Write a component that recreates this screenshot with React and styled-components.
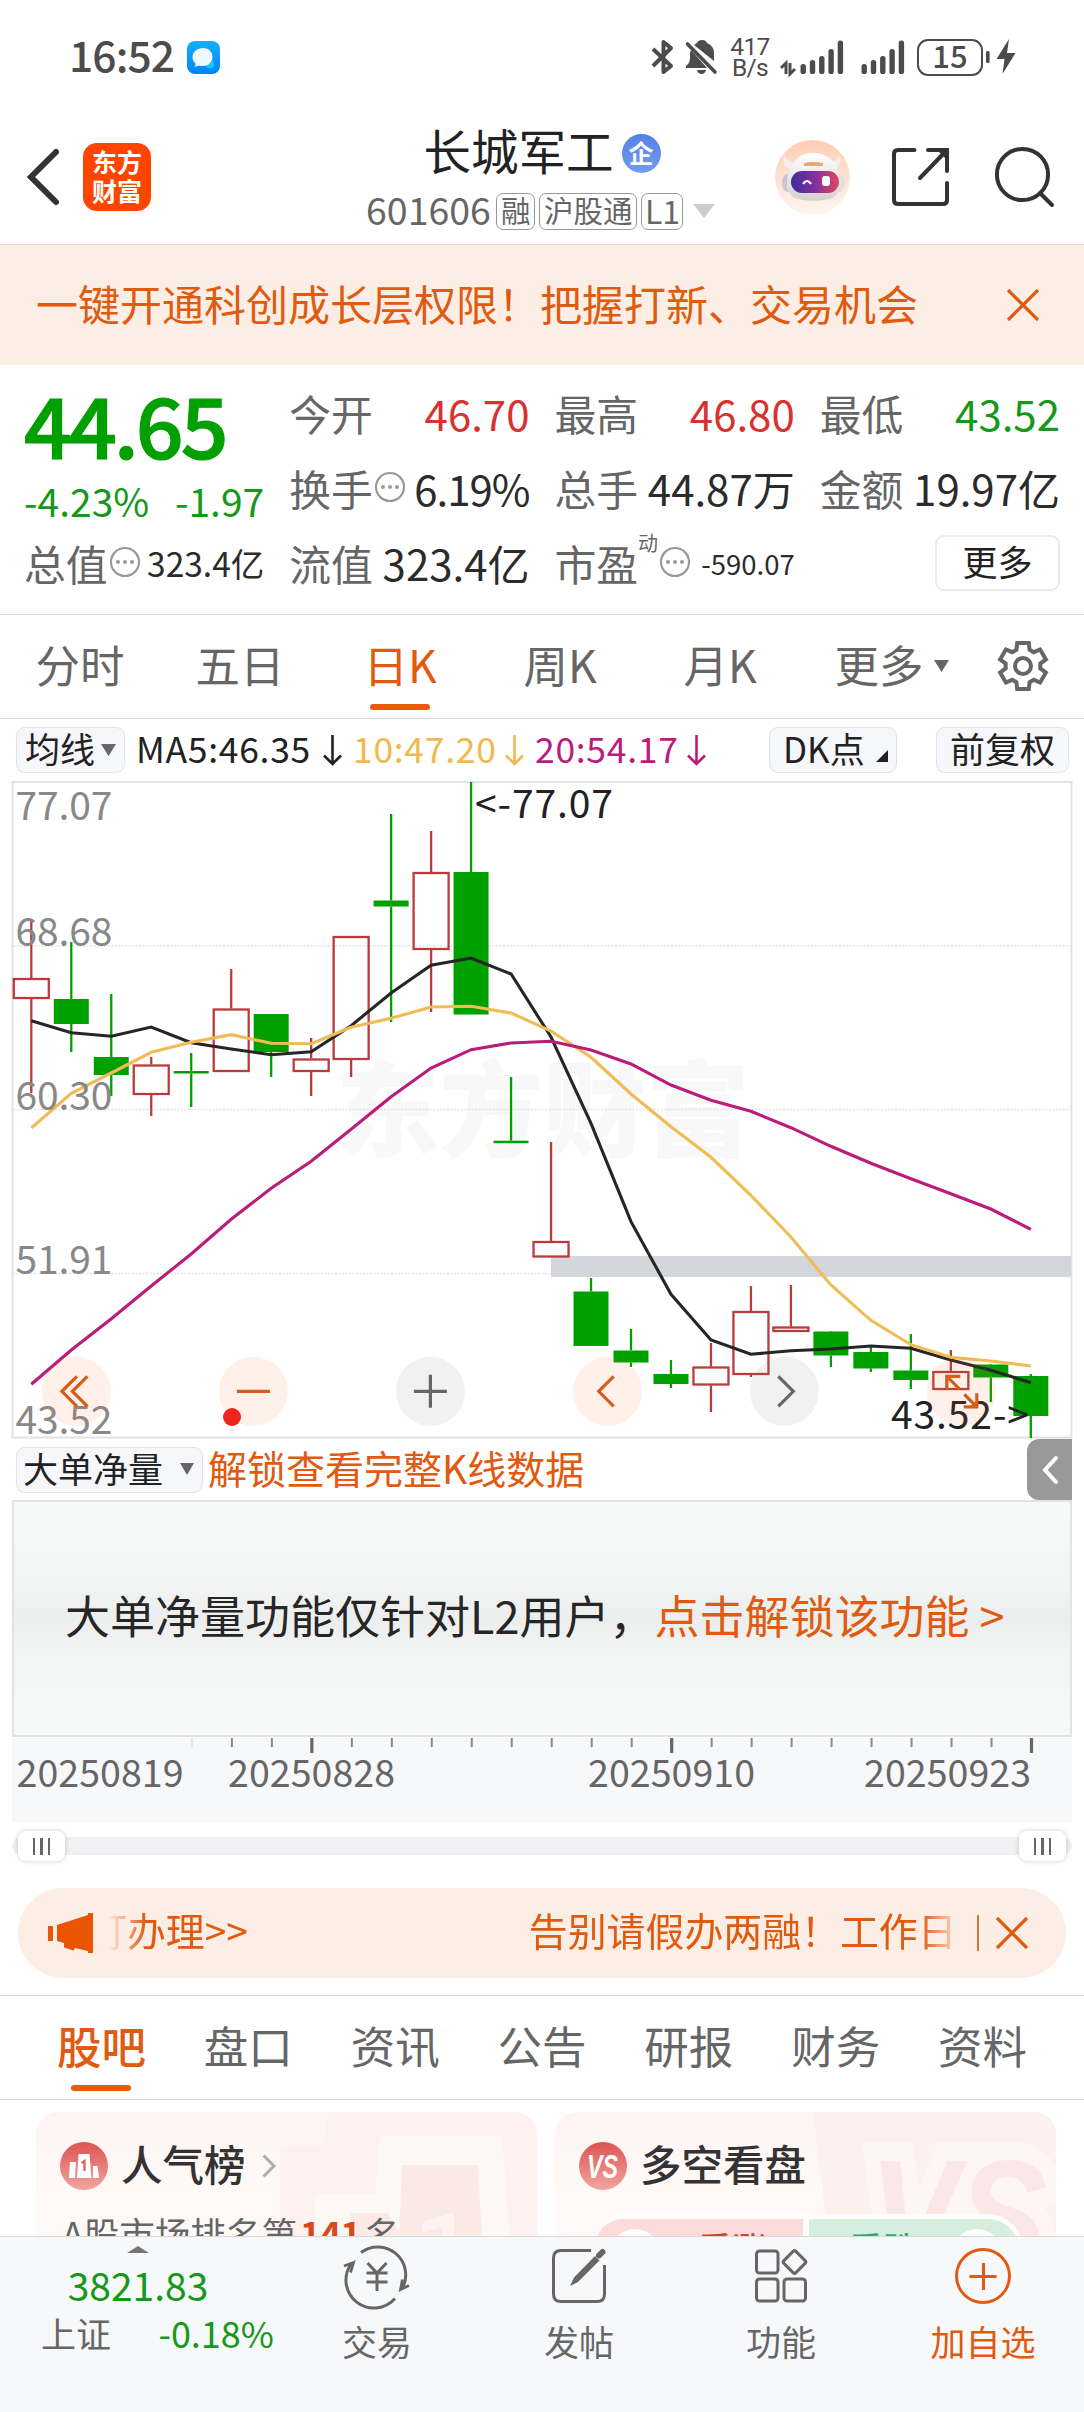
import React from 'react';
import styled, { createGlobalStyle, css } from 'styled-components';

const ORANGE = '#e05a10';
const GREEN = '#16981a';
const SOLID_GREEN = '#00a000';
const RED = '#d93030';
const CANDLE_RED = '#b93c3c';
const GREY = '#666';
const INK = '#2b2b2b';
const RULE = '#d9d9d9';

const GlobalStyle = createGlobalStyle`
  * {
    box-sizing: border-box;
  }
  body {
    margin: 0;
    background: #fff;
    font-family: 'Noto Sans CJK SC', sans-serif;
    color: ${INK};
  }
  svg {
    display: block;
    flex: none;
    overflow: visible;
  }
`;

const Page = styled.div`
  width: 1084px;
  height: 2412px;
  display: flex;
  flex-direction: column;
  overflow: hidden;
  white-space: nowrap;
`;

/* ---------- status bar ---------- */

const StatusBar = styled.div`
  height: 114px;
  flex: none;
  display: flex;
  align-items: center;
  padding: 0 67px 0 69px;
  color: #4c4c4c;
`;

const Clock = styled.span`
  width: 118px;
  font-size: 42.500px;
  line-height: 50px;
  letter-spacing: -0.9px;
  font-weight: 500;
  padding-bottom: 7px;
`;

const StatusIcons = styled.div`
  margin-left: auto;
  display: flex;
  align-items: center;
`;

const NetSpeed = styled.div`
  width: 40px;
  margin-left: 13px;
  text-align: center;
  font: 400 24.500px/21px Roboto, sans-serif;
  letter-spacing: -0.6px;
`;

const Battery = styled.div`
  width: 66px;
  height: 37px;
  margin-left: 12px;
  border: 2.5px solid #4c4c4c;
  border-radius: 11px;
  font-size: 31px;
  font-weight: 500;
  line-height: 27px;
  text-align: center;
`;

const BARS = [10, 14, 18, 25, 33.5];

const Signal = ({ arrows }) => (
  <svg width={arrows ? 62 : 44} height="34" fill="#4c4c4c">
    {arrows && (
      <path
        d="M0 28l5-5v11M9 23v11l5-5"
        fill="none"
        stroke="#4c4c4c"
        strokeWidth="3"
      />
    )}
    {BARS.map((h, i) => (
      <rect
        key={h}
        x={(arrows ? 19.5 : 0.5) + i * 9.3}
        y={34 - h}
        width="5.4"
        height={h}
        rx="2.6"
      />
    ))}
  </svg>
);

const Slot = styled.div`
  margin-left: ${props => props.gap}px;
`;

const Status = () => (
  <StatusBar>
    <Clock>16:52</Clock>
    <svg width="33" height="33" viewBox="0 0 33 33">
      <defs>
        <linearGradient id="msg" x1="0" y1="0" x2="0" y2="1">
          <stop offset="0" stopColor="#14b0ff" />
          <stop offset="1" stopColor="#0083fa" />
        </linearGradient>
      </defs>
      <rect width="33" height="33" rx="8" fill="url(#msg)" />
      <path d="M18 24c6-1 8-4 8-7l1 9-3 1q-4 1-6-3z" fill="#10cdf5" />
      <path
        d="M16 7c6 0 9.500 4 9.500 9s-4 9-9.500 9c-2 0-3 0-4-.6L8 26l.6-3.600C6.500 21 5.500 18.500 5.500 16 5.500 11 10 7 16 7z"
        fill="#f1f9ff"
      />
    </svg>
    <StatusIcons>
      <svg width="22" height="34" viewBox="0 0 22 34" fill="none" stroke="#4c4c4c">
        <path d="M1 9l18 17-7.500 6V2l7.500 6L1 26" strokeWidth="4" strokeLinejoin="round" />
      </svg>
      <Slot gap={12}>
        <svg width="31" height="34" viewBox="0 0 31 34" fill="#4c4c4c">
          <path d="M8 5l3-2q1-3 5-3t5 3q7 3 7 10v8zM5 10l16 18H0v-2q4-3 4-8v-5z" />
          <path d="M11 30h9q-1 4-4.500 4T11 30z" />
          <path d="M1.500 4L29 32" stroke="#4c4c4c" strokeWidth="3.600" strokeLinecap="round" />
        </svg>
      </Slot>
      <NetSpeed>
        417
        <br />
        B/s
      </NetSpeed>
      <Slot gap={11}>
        <Signal arrows />
      </Slot>
      <Slot gap={18}>
        <Signal />
      </Slot>
      <Battery>15</Battery>
      <Slot gap={3}>
        <svg width="31" height="36" viewBox="0 0 31 36" fill="#4c4c4c">
          <rect x="0" y="12" width="3.600" height="12" rx="1.600" />
          <path d="M23 0L10.500 20h8L16.500 35 29.500 14h-8.500z" />
        </svg>
      </Slot>
    </StatusIcons>
  </StatusBar>
);

/* ---------- title bar ---------- */

const TitleBar = styled.header`
  height: 131px;
  flex: none;
  display: grid;
  grid-template-columns: 330px 1fr 330px;
  border-bottom: 1px solid ${RULE};
`;

const BarSide = styled.div`
  display: flex;
  align-items: center;
  padding: 0 0 4px ${props => props.inset}px;
`;

const AppLogo = styled.div`
  width: 68px;
  height: 68px;
  margin-left: 23px;
  padding-top: 4px;
  border-radius: 14px;
  background: #ff4500;
  color: #fff;
  font-size: 25px;
  font-weight: 700;
  line-height: 29px;
  text-align: center;
`;

const TitleCol = styled.div`
  display: flex;
  flex-direction: column;
  align-items: center;
`;

const StockName = styled.h1`
  margin: 9px 0 0;
  display: flex;
  align-items: center;
  gap: 8px;
  height: 54px;
  font-size: 47.500px;
  font-weight: 400;
  color: #222;
  line-height: 54px;
`;

const OrgBadge = styled.span`
  width: 39px;
  height: 39px;
  margin-top: 6px;
  border-radius: 50%;
  background: linear-gradient(#5480e4, #739dee);
  color: #fff;
  font-size: 25px;
  font-weight: 700;
  line-height: 36px;
  text-align: center;
`;

const CodeRow = styled.div`
  display: flex;
  align-items: center;
  gap: 4.5px;
  margin: 14px 0 0 -3px;
  height: 40px;
  color: ${GREY};
`;

const StockCode = styled.span`
  font-size: 37.500px;
  line-height: 40px;
  padding-bottom: 5px;
  margin-right: 1px;
`;

const Tag = styled.span`
  height: 37px;
  padding: 0 3.5px;
  border: 1.500px solid #999;
  border-radius: 7px;
  font-size: 29.500px;
  line-height: 31px;
`;

const LevelTag = styled(Tag)`
  width: 42px;
  padding: 0;
  font-size: 32px;
  line-height: 32px;
  text-align: center;
`;

const Robot = () => (
  <svg width="75" height="75" viewBox="0 0 75 75">
    <defs>
      <linearGradient id="halo" x1="0" y1="0" x2="0" y2="1">
        <stop offset="0" stopColor="#ffcdb4" />
        <stop offset="1" stopColor="#fff6f1" />
      </linearGradient>
      <linearGradient id="visor">
        <stop offset="0" stopColor="#3a2f9e" />
        <stop offset=".55" stopColor="#8c2f9c" />
        <stop offset="1" stopColor="#e04a5c" />
      </linearGradient>
      <linearGradient id="shell" x1="0" y1="0" x2="0" y2="1">
        <stop offset="0" stopColor="#fff" />
        <stop offset="1" stopColor="#d6cfd2" />
      </linearGradient>
    </defs>
    <circle cx="37.500" cy="37.500" r="37.500" fill="url(#halo)" />
    <path d="M17 30Q6 27 9 15q2 6 11 8zM56 30q12-3 9-15-2 6-11 8z" fill="#f3eef0" />
    <ellipse cx="12" cy="43" rx="5" ry="9" fill="#cfc7cb" />
    <ellipse cx="65" cy="43" rx="5" ry="9" fill="#e6dfe2" />
    <path
      d="M38 13c15 0 22 8 26 20 3 12 0 20-5 24-9 5-32 5-41 0-6-4-8-13-4-25 4-11 10-19 24-19z"
      fill="url(#shell)"
    />
    <path d="M29 23q8-2 19 0v3H29z" fill="#e8a878" />
    <rect x="16" y="31" width="48" height="22" rx="11" fill="url(#visor)" />
    <path d="M28 44q4-6 8 0" fill="none" stroke="#fff" strokeWidth="2.200" />
    <rect x="47" y="36" width="8" height="10" rx="3" fill="#fff" />
  </svg>
);

const Header = () => (
  <TitleBar>
    <BarSide inset={27}>
      <svg width="33" height="56" viewBox="0 0 33 56" fill="none">
        <path d="M29 3L4 28l25 25" stroke="#333" strokeWidth="6" strokeLinecap="round" />
      </svg>
      <AppLogo>
        东方
        <br />
        财富
      </AppLogo>
    </BarSide>
    <TitleCol>
      <StockName>
        长城军工<OrgBadge>企</OrgBadge>
      </StockName>
      <CodeRow>
        <StockCode>601606</StockCode>
        <Tag>融</Tag>
        <Tag>沪股通</Tag>
        <LevelTag>L1</LevelTag>
        <svg width="27" height="14" viewBox="-5 0 27 14" fill="#ccc">
          <path d="M0 0h22L11 14z" />
        </svg>
      </CodeRow>
    </TitleCol>
    <BarSide inset={21}>
      <Robot />
      <Slot gap={42}>
        <svg width="57" height="58" viewBox="0 0 57 58" fill="none" stroke="#333" strokeWidth="4">
          <path
            d="M22.500 2H6Q2 2 2 6v46q0 4 4 4h45q4 0 4-4V35M36 2h19v21M55 2L28 30"
            strokeLinecap="round"
          />
          <path d="M46 3h8v8z" fill="#333" stroke="none" />
        </svg>
      </Slot>
      <Slot gap={46}>
        <svg width="60" height="60" viewBox="0 0 60 60" fill="none" stroke="#333" strokeWidth="4">
          <circle cx="27.500" cy="27.500" r="25.600" />
          <path d="M45 46l12 12" strokeLinecap="round" />
        </svg>
      </Slot>
    </BarSide>
  </TitleBar>
);

/* ---------- notice ---------- */

const Notice = styled.div`
  height: 120px;
  flex: none;
  display: flex;
  align-items: center;
  justify-content: space-between;
  padding: 0 45px 0 36px;
  background: #fceee5;
  color: ${ORANGE};
  font-size: 42px;
`;

const NoticeText = styled.span`
  padding-bottom: 5px;
`;

const Cross = () => (
  <svg width="32" height="32" viewBox="0 0 32 32">
    <path d="M1 1l30 30M31 1L1 31" stroke={ORANGE} strokeWidth="3.200" />
  </svg>
);

/* ---------- quote ---------- */

const Quote = styled.section`
  height: 250px;
  flex: none;
  display: grid;
  grid-template-columns: repeat(4, 1fr);
  grid-template-rows: repeat(3, 75px);
  column-gap: 25px;
  padding: 11px 24px 0;
  border-bottom: 1px solid ${RULE};
`;

const PriceBox = styled.div`
  grid-row: span 2;
  color: ${GREEN};
`;

const Price = styled.div`
  color: ${SOLID_GREEN};
  font-size: 84px;
  font-weight: 500;
  line-height: 84px;
  letter-spacing: -3px;
  padding-top: 5px;
  -webkit-text-stroke: 1.2px ${SOLID_GREEN};
`;

const Change = styled.div`
  display: flex;
  justify-content: space-between;
  padding-top: 5px;
  font-size: 39px;
  line-height: 60px;
`;

const tones = { up: RED, down: GREEN, plain: INK };

const Field = styled.div`
  display: flex;
  align-items: center;
  justify-content: space-between;
  padding-bottom: 2px;
  font-size: 41.800px;
  line-height: 60px;
  color: ${GREY};
`;

const FieldLabel = styled.span`
  display: flex;
  align-items: center;
`;

const FieldValue = styled.span`
  color: ${({ tone = 'plain' }) => tones[tone]};
  font-size: ${({ size = 42 }) => size}px;
  letter-spacing: ${({ tight }) => (tight ? '-1px' : '0')};
`;

const Sup = styled.sup`
  align-self: flex-start;
  font-size: 20px;
  line-height: 20px;
`;

const MoreButton = styled.button`
  justify-self: end;
  align-self: center;
  width: 125px;
  height: 56px;
  margin-bottom: 1px;
  padding: 0 0 5px;
  border: 2px solid #e8ebed;
  border-radius: 9px;
  background: #fff;
  color: #222;
  font: 35px/46px 'Noto Sans CJK SC', sans-serif;
`;

const Hint = () => (
  <svg width="34" height="38" viewBox="-2 -3 34 38">
    <circle cx="15" cy="15" r="14" fill="none" stroke="#999" strokeWidth="2.200" />
    {[8, 15, 22].map(x => (
      <circle key={x} cx={x} cy="15" r="2" fill="#999" />
    ))}
  </svg>
);

const QuoteBoard = () => (
  <Quote>
    <PriceBox>
      <Price>44.65</Price>
      <Change>
        <span>-4.23%</span>
        <span>-1.97</span>
      </Change>
    </PriceBox>
    <Field>
      今开<FieldValue tone="up">46.70</FieldValue>
    </Field>
    <Field>
      最高<FieldValue tone="up">46.80</FieldValue>
    </Field>
    <Field>
      最低<FieldValue tone="down">43.52</FieldValue>
    </Field>
    <Field>
      <FieldLabel>
        换手
        <Hint />
      </FieldLabel>
      <FieldValue tight>6.19%</FieldValue>
    </Field>
    <Field>
      总手<FieldValue>44.87万</FieldValue>
    </Field>
    <Field>
      金额<FieldValue>19.97亿</FieldValue>
    </Field>
    <Field>
      <FieldLabel>
        总值
        <Hint />
      </FieldLabel>
      <FieldValue size={33.5}>323.4亿</FieldValue>
    </Field>
    <Field>
      流值<FieldValue>323.4亿</FieldValue>
    </Field>
    <Field>
      <FieldLabel>
        市盈
        <Sup>动</Sup>
        <Hint />
      </FieldLabel>
      <FieldValue size={27.5}>-590.07</FieldValue>
    </Field>
    <MoreButton>更多</MoreButton>
  </Quote>
);

/* ---------- tabs ---------- */

const TabBar = styled.nav`
  height: 104px;
  flex: none;
  display: flex;
  border-bottom: 1px solid ${RULE};
  font-size: 44.500px;
  color: ${GREY};
`;

const Tab = styled.div`
  width: ${props => props.width}px;
  display: flex;
  flex-direction: column;
  align-items: center;
  line-height: 60px;
  padding-top: 19px;

  ${({ active }) =>
    active &&
    css`
      color: ${ORANGE};

      &::after {
        content: '';
        width: 60px;
        height: 6px;
        margin-top: 10px;
        border-radius: 3px;
        background: #e95a0c;
      }
    `}
`;

const SectionBar = styled(TabBar)`
  height: 105px;
  padding: 0 28px;
  border-top: 1px solid ${RULE};
`;

const SectionTab = styled(Tab)`
  font-weight: ${({ active }) => (active ? 500 : 400)};
`;

const MoreTab = styled(Tab)`
  flex-direction: row;
  align-items: flex-start;
  justify-content: center;
  padding-left: 19px;
  gap: 10px;
`;

const Caret = ({ width = 15, top = 0 }) => (
  <svg width={width} height={12 + top} viewBox={`0 ${-top} ${width} ${12 + top}`} fill={GREY}>
    <path d={`M0 0h${width}L${width / 2} 12z`} />
  </svg>
);

// six flat teeth, the first one pointing up
const gearPoints = Array.from({ length: 6 }, (_, i) =>
  [[-22, 17.5], [-14, 23.8], [14, 23.8], [22, 17.5]].map(([deg, r]) => {
    const a = ((i * 60 + deg) * Math.PI) / 180;
    return `${(r * Math.sin(a)).toFixed(1)},${(-r * Math.cos(a)).toFixed(1)}`;
  })
)
  .flat()
  .join(' ');

const GearSlot = styled.div`
  padding: 25px 0 0 33px;
`;

const Gear = () => (
  <svg width="52" height="52" viewBox="-26 -26 52 52" fill="none" stroke={GREY} strokeWidth="4">
    <polygon points={gearPoints} />
    <circle r="8" />
  </svg>
);

const PeriodTabs = () => (
  <TabBar>
    <Tab width={160}>分时</Tab>
    <Tab width={160}>五日</Tab>
    <Tab width={160} active>
      日K
    </Tab>
    <Tab width={160}>周K</Tab>
    <Tab width={160}>月K</Tab>
    <MoreTab width={164}>
      更多
      <Caret top={26} />
    </MoreTab>
    <GearSlot>
      <Gear />
    </GearSlot>
  </TabBar>
);

/* ---------- chart ---------- */

const ChartBar = styled.div`
  height: 62px;
  flex: none;
  display: flex;
  align-items: center;
  padding: 0 15px 0 16px;
  font-size: 35.500px;
`;

const Chip = styled.button`
  width: ${props => props.width}px;
  height: 46px;
  display: flex;
  align-items: center;
  justify-content: ${({ spread }) => (spread ? 'space-between' : 'center')};
  gap: 6px;
  padding: 0 8px 4px ${({ inset = 8 }) => inset}px;
  border: 1.500px solid #dfe3e8;
  border-radius: 9px;
  background: #f6f7fa;
  color: #222;
  font: 35px/40px 'Noto Sans CJK SC', sans-serif;
`;

const Average = styled.span`
  width: ${props => props.width}px;
  margin-left: 11px;
  display: flex;
  align-items: center;
  justify-content: space-between;
  color: ${props => props.color};
  letter-spacing: 0.7px;
  line-height: 46px;
  padding-bottom: 5px;
`;

const DownArrow = ({ color }) => (
  <svg width="19" height="36" viewBox="0 -5 19 36" fill="none" stroke={color} strokeWidth="2.600">
    <path d="M9.500 0v29M1 20.500l8.500 8.500 8.500-8.500" />
  </svg>
);

const ChipSpacer = styled.div`
  margin-left: auto;
  display: flex;
  gap: 39px;
`;

const averages = [
  { text: 'MA5:46.35', color: '#222', width: 206 },
  { text: '10:47.20', color: '#f0b94f', width: 171 },
  { text: '20:54.17', color: '#b91c7b', width: 171 },
];

// [wick top, body top, body bottom, wick bottom, rising]
const candles = [
  [920, 978, 999, 1093, 1],
  [942, 999, 1024, 1052, 0],
  [994, 1057, 1075, 1096, 0],
  [1057, 1064.5, 1095, 1116, 1],
  [1053, 1071, 1073.5, 1107, 0],
  [969, 1008.5, 1072, 1072, 1],
  [1014, 1014, 1052, 1077, 0],
  [1038, 1058.5, 1072, 1096, 1],
  [936, 936, 1060, 1077, 1],
  [814, 900.5, 906.5, 1022, 0],
  [831, 872, 950, 1012, 1],
  [782, 872, 1014.5, 1014.5, 0],
  [1077, 1140.7, 1143.2, 1143, 0],
  [1142, 1241, 1257.5, 1257, 1],
  [1278, 1291.5, 1346, 1346, 0],
  [1329, 1350.5, 1362.5, 1367, 0],
  [1360, 1374, 1384, 1388, 0],
  [1343, 1366.5, 1385.500, 1412, 1],
  [1286, 1311, 1375, 1377, 1],
  [1285, 1326.5, 1332, 1332, 1],
  [1331, 1331.5, 1355.5, 1367, 0],
  [1347, 1352, 1368.5, 1372, 0],
  [1334, 1370.5, 1380, 1389, 0],
  [1350, 1371, 1390, 1390, 1],
  [1364, 1364.5, 1377.5, 1402, 0],
  [1374, 1376, 1416, 1438, 0],
];

const ma5 = [
  1020.7, 1032.7, 1036.3, 1027, 1042.7, 1049, 1054.7, 1051.7, 1025.7, 993, 965.3, 958, 974, 1037,
  1123.3, 1221.7, 1294.3, 1340, 1354.3, 1350.7, 1349, 1346, 1348.3, 1360, 1370.3, 1382.7,
];
const ma10 = [
  1128, 1093.3, 1073, 1052.3, 1042.3, 1034.7, 1043.3, 1043.7, 1027.3, 1018.3, 1007, 1006.3, 1013,
  1031, 1057.3, 1094, 1126.7, 1157.3, 1195.3, 1237, 1285, 1320.3, 1344.7, 1357.3, 1361, 1366,
];
const ma20 = [
  1384.3, 1350, 1318.7, 1286, 1254, 1219.3, 1188.3, 1161.3, 1129.3, 1096.7, 1068, 1049.7, 1043,
  1041.3, 1050, 1064, 1085, 1100.3, 1111.3, 1127.7, 1146.3, 1163.3, 1178.7, 1193.7, 1209, 1229.3,
];

const dayX = i => 31.3 + i * 39.98;
const toPoints = ys => ys.map((y, i) => `${dayX(i).toFixed(1)},${y}`).join(' ');

const Candle = ({ index, data: [high, top, bottom, low, rising] }) => {
  const x = dayX(index);
  const color = rising ? CANDLE_RED : SOLID_GREEN;
  return (
    <g stroke={color} strokeWidth="2.300">
      {high < top && <path d={`M${x} ${high}V${top}`} />}
      {low > bottom && <path d={`M${x} ${bottom}V${low}`} />}
      {rising ? (
        <rect x={x - 17.5} y={top + 1} width="35" height={bottom - top - 2} fill="none" />
      ) : (
        <rect x={x - 17.5} y={top} width="35" height={bottom - top} fill={color} stroke="none" />
      )}
    </g>
  );
};

const Series = styled.polyline`
  fill: none;
  stroke: ${props => props.color};
  stroke-width: 3.1px;
`;

const AxisText = styled.text`
  font-size: ${({ size = 39 }) => size}px;
  fill: ${({ color = '#888' }) => color};
`;

const Watermark = styled.text`
  font-size: 104px;
  font-weight: 900;
  fill: #f8f8f8;
`;

const controls = [
  { x: 76.4, warm: true, d: 'M0.500 -15l-15 15 15 15M11 -15l-15 15 15 15' },
  { x: 253.4, warm: true, d: 'M-16.500 0h33' },
  { x: 430.4, d: 'M-16.500 0h33M0 -16.500v33' },
  { x: 607.7, warm: true, d: 'M6 -15l-15 15 15 15' },
  { x: 784.3, d: 'M-6 -15l15 15 -15 15' },
  { x: 961.3, warm: true, d: 'M-1 -15h-13.500v13M-14.500 -15l12.500 12.500M15.500 2v13.500h-13M3 3l12.500 12.500' },
];

const labels = [['77.07', 820], ['68.68', 946], ['60.30', 1110], ['51.91', 1273.5], ['43.52', 1433.5]];

const KLine = () => (
  <svg width="1084" height="658" viewBox="0 781 1084 658">
    <Watermark x="336" y="1149" textLength="414">
      东方财富
    </Watermark>
    <g stroke="#e2e2e2" strokeWidth="1.500" strokeDasharray="2 1.500">
      <path d="M13 946H1071M13 1109.500H1071M13 1273.500H1071" />
    </g>
    <path d="M12.500 782H1071.500V1437.500H12.500z" fill="none" stroke="#e2e2e2" strokeWidth="2" />
    <rect x="551" y="1256" width="520" height="21" fill="#d3d6db" />
    {candles.map((data, i) => (
      <Candle key={i} index={i} data={data} />
    ))}
    <Series points={toPoints(ma5)} color="#262626" />
    <Series points={toPoints(ma10)} color="#efbc55" />
    <Series points={toPoints(ma20)} color="#b91c7b" />
    {labels.map(([text, y]) => (
      <AxisText key={text} x="15.500" y={y} textLength="97">
        {text}
      </AxisText>
    ))}
    <AxisText x="475" y="818" textLength="138" color="#222">
      {'<-77.07'}
    </AxisText>
    <AxisText x="891" y="1429" textLength="138" color="#222">
      {'43.52->'}
    </AxisText>
    {controls.map(({ x, warm, d }) => (
      <g key={x} transform={`translate(${x} 1391.300)`}>
        <circle r="34.500" fill={warm ? 'rgba(255,110,40,.1)' : 'rgba(120,120,120,.1)'} />
        <path d={d} fill="none" stroke={warm ? '#d65c1c' : GREY} strokeWidth="3.200" />
      </g>
    ))}
    <circle cx="232" cy="1417" r="9" fill="#f0241e" />
  </svg>
);

const IndicatorBar = styled.div`
  height: 61px;
  flex: none;
  display: flex;
  align-items: center;
  padding: 0 12px 0 16px;
`;

const UnlockLink = styled.a`
  margin: 0 auto 6px 5px;
  color: ${ORANGE};
  font-size: 39px;
  line-height: 50px;
`;

const Drawer = styled.div`
  width: 45px;
  height: 61px;
  display: flex;
  align-items: center;
  justify-content: center;
  border-radius: 12px 0 0 12px;
  background: #999;
`;

const LockedPanel = styled.div`
  height: 237px;
  flex: none;
  margin: 0 12px;
  padding: 0 0 8px 51px;
  display: flex;
  align-items: center;
  border: 2px solid #e2e3e3;
  background: linear-gradient(#f8faf9, #f3f4f4 35%, #eceeee 50%, #f3f4f4 65%, #f8faf9);
  color: #262626;
  font-size: 45px;
`;

const Accent = styled.span`
  color: ${ORANGE};
`;

const dates = [[16.5, '20250819'], [228, '20250828'], [588, '20250910'], [864, '20250923']];
const majorTicks = [7, 16, 25];

const DateAxis = () => (
  <svg width="1084" height="85" viewBox="0 1737 1084 85">
    <rect x="12" y="1738" width="1060" height="84" fill="#f7f8fa" />
    {candles.map((_, i) => {
      const major = majorTicks.includes(i);
      return (
        i > 3 && (
          <path
            key={i}
            d={`M${dayX(i) + 0.7} 1738v${major ? 15 : 9}`}
            stroke={i === 4 ? '#e4e4e4' : major ? '#666' : '#888'}
            strokeWidth={major ? 3.2 : 2}
          />
        )
      );
    })}
    {dates.map(([x, text]) => (
      <AxisText key={text} x={x} y="1786.500" size={37.5} color={GREY} textLength="167">
        {text}
      </AxisText>
    ))}
  </svg>
);

const RangeTrack = styled.div`
  height: 18px;
  flex: none;
  margin: 15px 12px 0;
  padding: 0 6px;
  display: flex;
  align-items: center;
  justify-content: space-between;
  border-radius: 9px;
  background: #f1f1f4;
`;

const Handle = styled.div`
  width: 47px;
  height: 30px;
  display: flex;
  align-items: center;
  justify-content: center;
  gap: 5px;
  border-radius: 8px;
  background: #fff;
  box-shadow: 0 0 5px rgba(0, 0, 0, 0.2);

  i {
    width: 2.5px;
    height: 17px;
    background: #666;
  }
`;

const Range = () => (
  <RangeTrack>
    {['from', 'to'].map(side => (
      <Handle key={side}>
        <i />
        <i />
        <i />
      </Handle>
    ))}
  </RangeTrack>
);

/* ---------- promo ---------- */

const Promo = styled.div`
  height: 90px;
  flex: none;
  margin: 33px 18px 17px;
  padding: 0 38px 0 30px;
  display: flex;
  align-items: center;
  border-radius: 45px;
  background: #fceee5;
`;

const Ticker = styled.div`
  width: 854px;
  margin-left: 15px;
  overflow: hidden;
  display: flex;
  gap: 281px;
  color: ${ORANGE};
  font-size: 38.900px;
  line-height: 56px;
  padding-bottom: 8px;
  mask-image: linear-gradient(90deg, transparent 0, #000 38px, #000 812px, transparent 854px);

  span:first-child {
    margin-left: -20px;
  }
`;

const Divider = styled.i`
  width: 1.5px;
  height: 36px;
  margin: 0 17px 0 15px;
  background: #c9783f;
`;

const sections = ['股吧', '盘口', '资讯', '公告', '研报', '财务', '资料'];

/* ---------- cards ---------- */

const Cards = styled.div`
  flex: 1;
  min-height: 0;
  display: flex;
  gap: 18px;
  padding: 12px 28px 0 36px;
  overflow: hidden;
`;

const Card = styled.article`
  position: relative;
  width: 501px;
  height: 240px;
  flex: none;
  padding: 24px 24px 0;
  border-radius: 22px;
  overflow: hidden;
  background: linear-gradient(#fef5f3, #fffaf7 40%);
`;

const CardArt = styled.svg`
  position: absolute;
  top: 0;
  left: 0;
`;

const CardHead = styled.div`
  position: relative;
  height: 60px;
  display: flex;
  align-items: center;
`;

const CardTitle = styled.h2`
  margin: 0 16px 6px 13px;
  font-size: 41.500px;
  font-weight: 500;
  line-height: 50px;
  color: #333;
`;

const RankLine = styled.p`
  position: relative;
  margin: 15px 0 0 2px;
  color: ${GREY};
  font-size: 35.600px;
  line-height: 44px;

  b {
    color: #d9481c;
    letter-spacing: -0.8px;
    margin: 0 4px 0 3px;
  }
`;

const VoteBar = styled.div`
  position: relative;
  width: 434px;
  height: 70px;
  margin: 18px 0 0 10px;
  border: 5px solid #fffdfc;
  border-radius: 40px;
  display: flex;
  gap: 6px;
  overflow: hidden;
  background: #fffdfc;
`;

const Vote = styled.div`
  flex: 1;
  display: flex;
  justify-content: space-between;
  flex-direction: ${({ down }) => (down ? 'row-reverse' : 'row')};
  padding: 10px 16px 0;
  background: ${({ down }) => (down ? '#d5eedd' : '#fcdcda')};
  color: ${({ down }) => (down ? '#3ea86a' : '#c8472f')};
  font-size: 34px;
  font-weight: 500;
  line-height: 44px;

  &::before {
    content: '';
    width: 50px;
    height: 50px;
    border-radius: 50%;
    background: #fff;
  }
  span {
    margin: ${({ down }) => (down ? '-3px 0 0 24px' : '-3px 21px 0 0')};
  }
`;

const BadgeFill = () => (
  <defs>
    <linearGradient id="badge" x1="0" y1="0" x2="0" y2="1">
      <stop offset="0" stopColor="#dc5450" />
      <stop offset="1" stopColor="#f2a5a2" />
    </linearGradient>
  </defs>
);

const VsText = styled.text`
  font-family: 'Liberation Sans', sans-serif;
  font-weight: 700;
  font-style: italic;
`;

const CardRow = () => (
  <Cards>
    <Card>
      <CardArt width="501" height="130" viewBox="0 0 501 130">
        <path d="M291 0H501V130H244V33H288z" fill="#fdf2ef" />
        <path d="M344 24H466L474 130H279V82H339z" fill="#fef8f5" />
        <path d="M366 53H442L446 130H363V120L352 101H315V130H363z" fill="#fbe9e6" />
        <path d="M387 110l31-10v30h-12v-15l-20 6z" fill="#fef3f0" />
      </CardArt>
      <CardHead>
        <svg width="48" height="48" viewBox="0 0 48 48">
          <BadgeFill />
          <circle cx="24" cy="24" r="24" fill="url(#badge)" />
          <path d="M10 20h6l-1 16H9zM18.500 12h11l2 24H17zM33 24h4.500l1.500 12h-6z" fill="#fff" />
          <path d="M21.500 21l3-2v10" fill="none" stroke="#dd6663" strokeWidth="2.400" />
        </svg>
        <CardTitle>人气榜</CardTitle>
        <svg width="14" height="24" viewBox="0 0 14 24" fill="none">
          <path d="M1.500 1.500L12 12 1.500 22.500" stroke="#b0acab" strokeWidth="3" />
        </svg>
      </CardHead>
      <RankLine>
        A股市场排名第<b>141</b>名
      </RankLine>
    </Card>
    <Card>
      <CardArt width="501" height="130" viewBox="0 0 501 130">
        <path d="M258 0H501V130H274z" fill="#fdf1ee" />
        <VsText
          x="314"
          y="163"
          fontSize="165"
          textLength="178"
          lengthAdjust="spacingAndGlyphs"
          fill="#fbe8e6"
          stroke="#fef6f3"
          strokeWidth="38"
          paintOrder="stroke"
        >
          VS
        </VsText>
      </CardArt>
      <CardHead>
        <svg width="48" height="48" viewBox="0 0 48 48">
          <circle cx="24" cy="24" r="24" fill="url(#badge)" />
          <VsText x="8" y="36" fontSize="33" textLength="31" lengthAdjust="spacingAndGlyphs" fill="#fff">
            VS
          </VsText>
        </svg>
        <CardTitle>多空看盘</CardTitle>
      </CardHead>
      <VoteBar>
        <Vote>
          <span>看涨</span>
        </Vote>
        <Vote down>
          <span>看跌</span>
        </Vote>
      </VoteBar>
    </Card>
  </Cards>
);

/* ---------- bottom bar ---------- */

const BottomBar = styled.footer`
  position: relative;
  height: 176px;
  flex: none;
  display: flex;
  border-top: 1px solid #d6d8da;
  background: #f7f8fa;
`;

const IndexBox = styled.div`
  width: 276px;
  display: flex;
  flex-direction: column;
  align-items: center;
  padding-top: 9px;
  color: ${GREEN};
`;

const IndexValue = styled.div`
  margin-top: 5px;
  font-size: 39px;
  line-height: 52px;
`;

const IndexRow = styled.div`
  align-self: stretch;
  display: flex;
  justify-content: space-between;
  padding: 0 2px 0 41px;
  font-size: 36px;
  line-height: 45px;

  span {
    color: ${GREY};
    font-size: 35px;
  }
`;

const Action = styled.div`
  width: 202px;
  display: flex;
  flex-direction: column;
  align-items: center;
  padding-top: 10px;
  color: ${({ primary }) => (primary ? ORANGE : GREY)};
  font-size: 35px;
  line-height: 44px;

  svg {
    margin-bottom: 14px;
  }
`;

const ActionIcon = ({ children }) => (
  <svg width="68" height="58" viewBox="-34 -29 68 58" fill="none" stroke="currentColor" strokeWidth="3">
    {children}
  </svg>
);

const Footer = () => (
  <BottomBar>
    <IndexBox>
      <svg width="22" height="7" viewBox="0 0 22 7" fill="#777">
        <path d="M0 7L11 0l11 7z" />
      </svg>
      <IndexValue>3821.83</IndexValue>
      <IndexRow>
        <span>上证</span>-0.18%
      </IndexRow>
    </IndexBox>
    <Action>
      <ActionIcon>
        <path d="M-16 -23.500A28 28 0 0 1 25.500 12M18 22.500A28 28 0 0 1 -26 -12" />
        <path d="M-33 -10l9.500-3.500-3 10M32 9.500l-8.500 4 2-10" strokeWidth="2.800" />
        <path d="M-9.500 -13L0 -3l9.500-10M0 -3v18M-10.500 -3h21M-10.500 6h21" />
      </ActionIcon>
      交易
    </Action>
    <Action>
      <ActionIcon>
        <path d="M12 -25.500H-18Q-25.500 -25.500 -25.500 -18V18Q-25.500 25.500 -18 25.500H18Q25.500 25.500 25.500 18V-11" />
        <path d="M-9 10L-5 1.500 16 -20l4.500 4.500L-1 6z" fill="currentColor" stroke="none" />
        <path d="M20 -20.500l3.500-3.500" strokeWidth="6" strokeLinecap="round" />
      </ActionIcon>
      发帖
    </Action>
    <Action>
      <ActionIcon>
        <rect x="-24.500" y="-25" width="21.500" height="22" rx="3" />
        <rect x="-24.500" y="3" width="21.500" height="22" rx="3" />
        <rect x="3" y="3" width="21.500" height="22" rx="3" />
        <rect x="-8.500" y="-8.500" width="17" height="17" rx="2" transform="translate(13.500 -14) rotate(45)" />
      </ActionIcon>
      功能
    </Action>
    <Action primary>
      <ActionIcon>
        <circle r="26.500" />
        <path d="M-13.500 .5h27M.5 -13v27" />
      </ActionIcon>
      加自选
    </Action>
  </BottomBar>
);

const App = () => (
  <>
    <GlobalStyle />
    <Page>
      <Status />
      <Header />
      <Notice>
        <NoticeText>一键开通科创成长层权限！把握打新、交易机会</NoticeText>
        <Cross />
      </Notice>
      <QuoteBoard />
      <PeriodTabs />
      <ChartBar>
        <Chip width={109}>
          均线
          <Caret top={3} />
        </Chip>
        {averages.map(({ text, color, width }) => (
          <Average key={text} color={color} width={width}>
            {text}
            <DownArrow color={color} />
          </Average>
        ))}
        <ChipSpacer>
          <Chip width={128} spread inset={13}>
            DK点
            <svg width="12" height="28" viewBox="0 0 12 28" fill="#222">
              <path d="M12 16v12H0z" />
            </svg>
          </Chip>
          <Chip width={133}>前复权</Chip>
        </ChipSpacer>
      </ChartBar>
      <KLine />
      <IndicatorBar>
        <Chip width={187} spread inset={6}>
          大单净量
          <Caret width={14} top={2} />
        </Chip>
        <UnlockLink>解锁查看完整K线数据</UnlockLink>
        <Drawer>
          <svg width="18" height="30" viewBox="0 0 18 30" fill="none">
            <path d="M15 3L4 15l11 12" stroke="#fff" strokeWidth="4" strokeLinecap="round" />
          </svg>
        </Drawer>
      </IndicatorBar>
      <LockedPanel>
        大单净量功能仅针对L2用户，<Accent>点击解锁该功能 &gt;</Accent>
      </LockedPanel>
      <DateAxis />
      <Range />
      <Promo>
        <svg width="45" height="40" viewBox="0 0 45 40" fill="#ea5504">
          <path d="M0 13h5v15H0zM9 12L40 2V0h5v40h-5v-2L27 35l-1.500 2.500-9.500-3V30l-7-2z" />
        </svg>
        <Ticker>
          <span>订办理&gt;&gt;</span>
          <span>告别请假办两融！工作日</span>
        </Ticker>
        <Divider />
        <Cross />
      </Promo>
      <SectionBar>
        {sections.map((name, i) => (
          <SectionTab key={name} width={146.9} active={i === 0}>
            {name}
          </SectionTab>
        ))}
      </SectionBar>
      <CardRow />
      <Footer />
    </Page>
  </>
);

export default App;
